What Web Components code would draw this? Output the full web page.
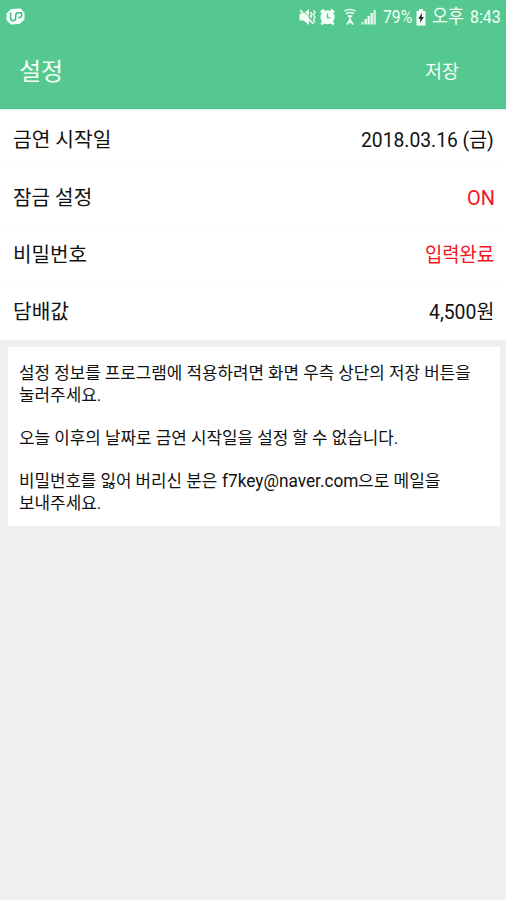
<!DOCTYPE html>
<html lang="ko">
<head>
<meta charset="utf-8">
<title>설정</title>
<style>
html,body{margin:0;height:100%}
body{background:#f0f0f0;font-family:Roboto,"Noto Sans CJK KR",sans-serif;color:#111;overflow:hidden}
</style>
</head>
<body>
<settings-screen></settings-screen>
<script>
const define = (name, html, setup) => customElements.define(name, class extends HTMLElement {
  connectedCallback() {
    if (this.shadowRoot) return;
    this.attachShadow({mode: 'open'}).innerHTML = html;
    if (setup) setup(this, this.shadowRoot);
  }
});

/* One line of text condensed or widened to the width given in "w". */
define('fit-text', `
<style>
:host{display:block;flex:none;white-space:nowrap}
span{display:inline-block;transform-origin:0 50%;white-space:pre}
</style><span><slot></slot></span>`, (el, root) => {
  const w = Number(el.getAttribute('w'));
  const s = root.querySelector('span');
  el.style.width = w + 'px';
  s.style.transform = `scaleX(${w / s.offsetWidth})`;
});

define('status-icons', `
<style>:host{display:block;flex:none;width:80px;height:20px}svg{display:block}</style>
<svg width="80" height="20" viewBox="0 0 80 20" fill="#f4fff8">
  <path d="M1.500 6.500h4L11 2v16l-5.500-4.500h-4z"/>
  <path d="M4 2.600L16 14.500" stroke="#55c890" stroke-width="1"/>
  <path d="M2 3L15.500 17" stroke="#f4fff8" stroke-width="1.700"/>
  <path d="M12.500 5l1.500 2-1.500 2 1.500 2M15.500 3L17 5.500 15.500 8l1.500 2.500-1.500 2.500 1.500 2.500" fill="none" stroke="#f4fff8" stroke-width="1.300"/>
  <circle cx="29.500" cy="10.200" r="7"/>
  <path d="M23 5.500l3-2.800M36 5.500l-3-2.800M25 15.500l-1.500 2M34 15.500l1.500 2" stroke="#f4fff8" stroke-width="2.600"/>
  <path d="M29.500 6.500v4.200h3" fill="none" stroke="#55c890" stroke-width="1.300"/>
  <g fill="none" stroke="#e6faef" stroke-width="1.700">
    <path d="M46.500 4q5.500-3 11 0M48 6.800q4-2.300 8 0M49.800 9.500q2.200-1.200 4.400 0M52 9v3.500M48.800 17.500l3.200-5 3.200 5M50.300 15.500h3.400"/>
  </g>
  <path d="M63.500 15h2v2.500h-2zM66.500 12h2.300v5.500h-2.300zM69.500 9h2.300v8.500h-2.300zM72.500 6h2.300v11.500h-2.300z" fill="#e9fbf1"/>
  <path d="M75.500 3h2.300v14.500h-2.300z" fill="#d6f5e4"/>
</svg>`);

define('battery-icon', `
<style>:host{display:block;flex:none;width:10px;height:17px}svg{display:block}</style>
<svg width="10" height="17" viewBox="0 0 10 17"><path d="M3 0h4v2h2.500v14.500h-9V2H3z" fill="#f6fff9"/><path d="M6 3.800L2.300 9.700h2.200L4 14l3.800-6H5.600z" fill="#16221c"/></svg>`);

define('carrier-logo', `
<style>:host{display:block;flex:none;width:20px;height:18px}svg{display:block}</style>
<svg width="20" height="18" viewBox="0 0 20 18"><path d="M5 1L14.500.5 18.500 5v6.500L13.500 16l-9 .5-4-4.500V5.500z" fill="#f5fff9"/>
<path d="M4.500 4.500v5.300q0 3 2.600 3t2.600-3V7.500q0-2.700 2.700-2.700h3.600M15.700 5v2.500q0 2-2.500 2h-1" fill="none" stroke="#43b880" stroke-width="1.500"/></svg>`);

define('status-bar', `
<style>
:host{display:flex;align-items:center;height:34px;padding:0 5px 0 6px;color:#f4fff8;font-size:19px;line-height:34px}
.gap{flex:1}
status-icons{margin-right:5px}
battery-icon{margin:1px 6px 0 4px}
.t{margin-left:6px}
</style>
<carrier-logo></carrier-logo><div class="gap"></div>
<status-icons></status-icons><fit-text w="29">79%</fit-text><battery-icon></battery-icon>
<fit-text w="32">오후</fit-text><fit-text class="t" w="31">8:43</fit-text>`);

define('app-bar', `
<style>
:host{display:flex;justify-content:space-between;align-items:center;box-sizing:border-box;height:75px;padding:1px 47px 0 19px;color:#f4fff8}
.title{font-size:24px;line-height:74px}
.save{font-size:18.500px;line-height:74px}
</style>
<fit-text class="title" w="44">설정</fit-text><fit-text class="save" w="34">저장</fit-text>`);

define('setting-row', `
<style>
:host{display:flex;justify-content:space-between;align-items:center;box-sizing:border-box;height:57.400px;padding:4px 12px 0 13px;background:#fff;border-bottom:1px solid #fcfcfc;font-size:20.300px;line-height:30px}
:host([red]) .value{color:#f5131b}
</style>
<slot name="label"></slot><div class="value"><slot></slot></div>`);

define('notice-card', `
<style>
:host{display:block;margin:7.400px 6px 0 8px;height:179px;box-sizing:border-box;background:#fff;padding:16px 11px 0;font-size:16.700px;line-height:21.670px}
</style><slot></slot>`);

define('settings-screen', `
<style>
:host{display:block;width:506px;height:900px;background:#f0f0f0}
header{background:#55c890;height:109px;border-bottom:1px solid #d9fbed}
p{margin:0 0 21.670px}
.run{display:flex;align-items:baseline}
</style>
<header><status-bar></status-bar><app-bar></app-bar></header>
<main>
<setting-row><fit-text slot="label" w="98">금연 시작일</fit-text><fit-text w="133">2018.03.16 (금)</fit-text></setting-row>
<setting-row red><fit-text slot="label" w="79.500">잠금 설정</fit-text><fit-text w="27.500">ON</fit-text></setting-row>
<setting-row red><fit-text slot="label" w="74.500">비밀번호</fit-text><fit-text w="69.500">입력완료</fit-text></setting-row>
<setting-row><fit-text slot="label" w="56">담배값</fit-text><fit-text w="65">4,500원</fit-text></setting-row>
<notice-card>
<p><fit-text w="452">설정 정보를 프로그램에 적용하려면 화면 우측 상단의 저장 버튼을</fit-text><fit-text w="82">눌러주세요.</fit-text></p>
<p><fit-text w="379">오늘 이후의 날짜로 금연 시작일을 설정 할 수 없습니다.</fit-text></p>
<p><span class="run"><fit-text w="202.500">비밀번호를 잃어 버리신 분은 </fit-text><fit-text w="136" style="font-size:17.500px">f7key@naver.com</fit-text><fit-text w="82.500">으로 메일을</fit-text></span><fit-text w="82">보내주세요.</fit-text></p>
</notice-card>
</main>`);
</script>
</body>
</html>
